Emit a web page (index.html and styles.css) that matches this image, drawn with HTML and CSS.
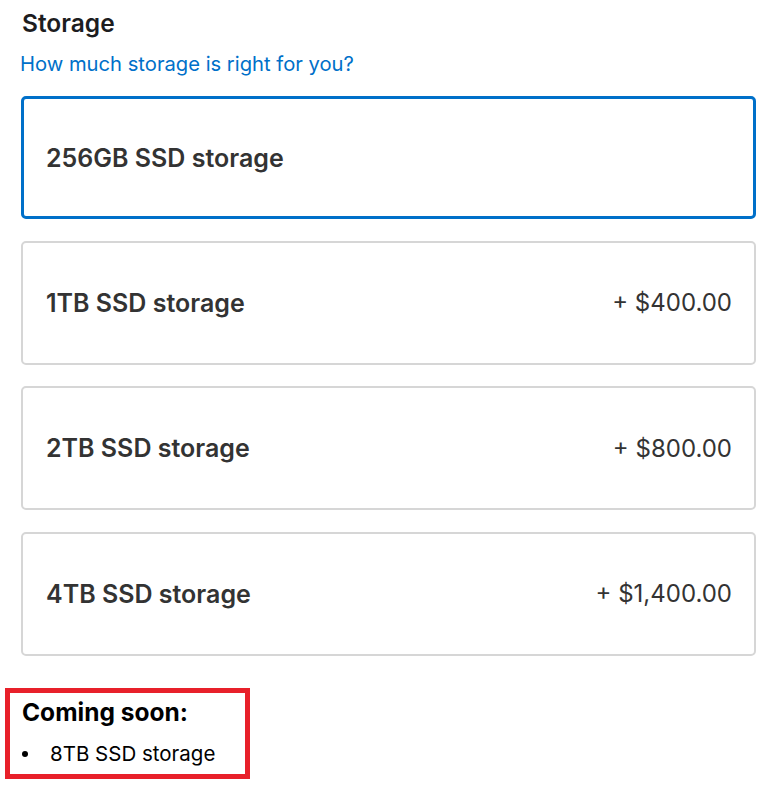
FILE: index.html
```html
<!DOCTYPE html>
<html>
<head>
<meta charset="utf-8">
<link rel="stylesheet" href="styles.css">
</head>
<body>
<main class="page">
  <h2 class="title">Storage</h2>
  <a class="help" href="#">How much storage is right for you?</a>
  <div class="options">
    <div class="option selected"><span class="name">256GB SSD storage</span></div>
    <div class="option"><span class="name">1TB SSD storage</span><span class="price">+ $400.00</span></div>
    <div class="option"><span class="name">2TB SSD storage</span><span class="price">+ $800.00</span></div>
    <div class="option"><span class="name">4TB SSD storage</span><span class="price">+ $1,400.00</span></div>
  </div>
  <div class="soon">
    <h3 class="soon-title">Coming soon:</h3>
    <ul class="soon-list">
      <li>8TB SSD storage</li>
    </ul>
  </div>
</main>
</body>
</html>
```
FILE: styles.css
```css
* { box-sizing: border-box; }
body {
  margin: 0;
  background: #fff;
  font-family: Inter, "Noto Sans", sans-serif;
  color: #1d1d1f;
}
.page {
  padding: 8px 24px 0 21px;
}
.title {
  margin: 0 0 0 1px;
  font-size: 24.5px;
  font-weight: 600;
  line-height: 30px;
  color: #1d1d1f;
}
.help {
  display: block;
  margin: 12px 0 0 -1px;
  font-size: 20.2px;
  line-height: 28px;
  color: #0070c9;
  text-decoration: none;
}
.options {
  display: flex;
  flex-direction: column;
  gap: 21.5px;
  margin-top: 18px;
}
.option {
  height: 124px;
  border: 2px solid #d6d6d6;
  border-radius: 5px;
  display: flex;
  align-items: center;
  justify-content: space-between;
  padding: 0 22px 0 23px;
  font-size: 24px;
  color: #333;
}
.option.selected {
  height: 123px;
  border-color: #0070c9;
  border-width: 3px;
  padding: 0 21px 0 22px;
}
.name {
  font-weight: 600;
  font-size: 25px;
}
.price {
  font-weight: 400;
}
.soon {
  display: inline-block;
  margin: 32px 0 0 -16px;
  width: 245px;
  height: 91px;
  border: 5px solid #e8202a;
  padding: 4px 0 0 12px;
}
.soon-title {
  margin: 0;
  font-size: 24.5px;
  font-weight: 700;
  line-height: 30px;
  color: #000;
}
.soon-list {
  list-style: none;
  margin: 14px 0 0;
  padding: 0;
  font-size: 20.5px;
  line-height: 26px;
  color: #000;
}
.soon-list li {
  display: flex;
  align-items: center;
}
.soon-list li::before {
  content: "";
  width: 6px;
  height: 6px;
  border-radius: 50%;
  background: #000;
  margin: 0 22px 0 0;
}
```
